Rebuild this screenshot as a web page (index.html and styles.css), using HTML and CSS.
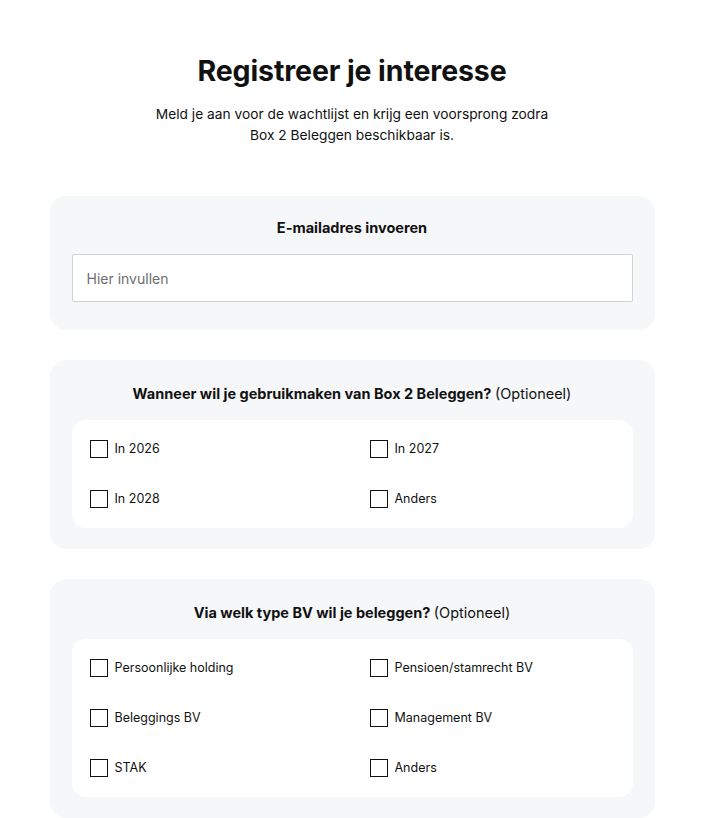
FILE: index.html
```html
<!DOCTYPE html>
<html lang="nl">
<head>
    <meta charset="UTF-8">
    <meta name="viewport" content="width=device-width, initial-scale=1.0">
    <title>Registreer je interesse</title>
    <link rel="stylesheet" href="styles.css">
</head>
<body>
    <div class="container">
        <h1>Registreer je interesse</h1>
        <p class="intro">Meld je aan voor de wachtlijst en krijg een voorsprong zodra<br>Box 2 Beleggen beschikbaar is.</p>

        <form class="signup">
            <div class="card card-email">
                <label class="card-title" for="email">E-mailadres invoeren</label>
                <input id="email" class="text-input" type="email" placeholder="Hier invullen">
            </div>

            <div class="card">
                <div class="card-title">Wanneer wil je gebruikmaken van Box 2 Beleggen? <span class="optional">(Optioneel)</span></div>
                <div class="options">
                    <label class="option"><input type="checkbox"><span class="box"></span>In 2026</label>
                    <label class="option"><input type="checkbox"><span class="box"></span>In 2027</label>
                    <label class="option"><input type="checkbox"><span class="box"></span>In 2028</label>
                    <label class="option"><input type="checkbox"><span class="box"></span>Anders</label>
                </div>
            </div>

            <div class="card">
                <div class="card-title">Via welk type BV wil je beleggen? <span class="optional">(Optioneel)</span></div>
                <div class="options">
                    <label class="option"><input type="checkbox"><span class="box"></span>Persoonlijke holding</label>
                    <label class="option"><input type="checkbox"><span class="box"></span>Pensioen/stamrecht BV</label>
                    <label class="option"><input type="checkbox"><span class="box"></span>Beleggings BV</label>
                    <label class="option"><input type="checkbox"><span class="box"></span>Management BV</label>
                    <label class="option"><input type="checkbox"><span class="box"></span>STAK</label>
                    <label class="option"><input type="checkbox"><span class="box"></span>Anders</label>
                </div>
            </div>
        </form>
    </div>
</body>
</html>
```

FILE: styles.css
```css
body {
    margin: 0;
    font-family: 'Inter', 'Liberation Sans', sans-serif;
    color: #111;
    background: #fff;
}

.container {
    width: 605px;
    margin: 0 auto;
    padding-top: 53px;
}

h1 {
    margin: 0;
    text-align: center;
    font-size: 28.5px;
    line-height: 36px;
    font-weight: 700;
    letter-spacing: -0.1px;
}

.intro {
    margin: 15px 0 0;
    text-align: center;
    font-size: 13.75px;
    line-height: 21px;
}

.signup {
    margin-top: 50px;
    display: flex;
    flex-direction: column;
    gap: 30px;
}

.card {
    background: #f6f7f9;
    border-radius: 16px;
    padding: 24px 22px 21px;
    display: flex;
    flex-direction: column;
}

.card-email {
    padding-top: 22px;
}

.card-title {
    display: block;
    text-align: center;
    font-size: 14.5px;
    line-height: 20px;
    font-weight: 700;
    margin-bottom: 16px;
}

.card-email .card-title {
    margin-bottom: 16px;
}

.optional {
    font-weight: 400;
}

.text-input {
    height: 48px;
    box-sizing: border-box;
    border: 1px solid #d2d2d2;
    border-radius: 2px;
    padding: 0 14px;
    font-family: inherit;
    font-size: 14px;
    color: #111;
    background: #fff;
    margin-bottom: 7px;
}

.text-input::placeholder {
    color: #6e6e6e;
}

.options {
    background: #fff;
    border-radius: 14px;
    padding: 20px 18px;
    display: grid;
    grid-template-columns: 1fr 1fr;
    column-gap: 35px;
    row-gap: 32px;
}

.option {
    display: flex;
    align-items: center;
    gap: 7px;
    font-size: 12.5px;
    line-height: 18px;
    cursor: pointer;
}

.option input {
    display: none;
}

.box {
    width: 18px;
    height: 18px;
    box-sizing: border-box;
    border: 1.5px solid #111;
    flex-shrink: 0;
}

.option input:checked + .box {
    background: #111;
}
```
